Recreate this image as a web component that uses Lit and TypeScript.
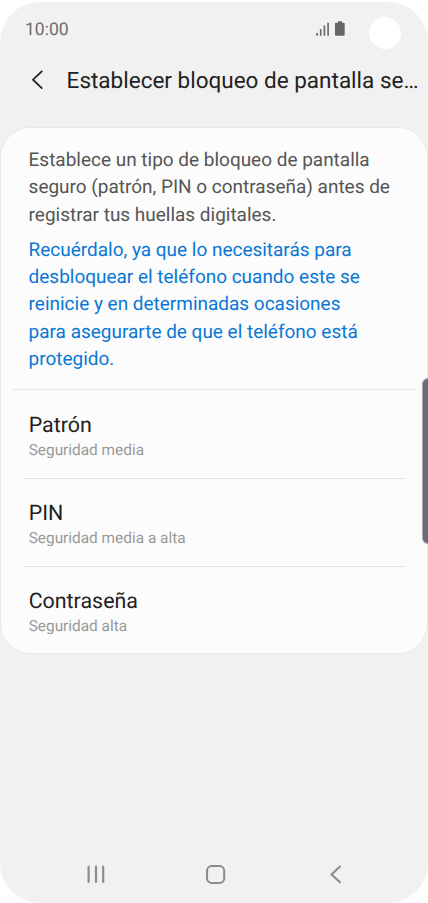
import { LitElement, html, css } from "lit";
import { customElement } from "lit/decorators.js";

const intro = [
  "Establece un tipo de bloqueo de pantalla",
  "seguro (patrón, PIN o contraseña) antes de",
  "registrar tus huellas digitales.",
];
const reminder = [
  "Recuérdalo, ya que lo necesitarás para",
  "desbloquear el teléfono cuando este se",
  "reinicie y en determinadas ocasiones",
  "para asegurarte de que el teléfono está",
  "protegido.",
];
const options = [
  { name: "Patrón", level: "Seguridad media" },
  { name: "PIN", level: "Seguridad media a alta" },
  { name: "Contraseña", level: "Seguridad alta" },
];

@customElement("app-root")
export class AppRoot extends LitElement {
  static styles = css`
    :host {
      display: block;
      width: 428px;
      height: 903px;
      background: #fff;
      overflow: hidden;
      font-family: Roboto, "Liberation Sans", sans-serif;
      text-rendering: geometricPrecision;
    }
    * {
      box-sizing: border-box;
    }
    svg {
      display: block;
    }
    .screen {
      position: relative;
      display: flex;
      flex-direction: column;
      height: 901px;
      margin-top: 2px;
      background: #f1f1f1;
      border-radius: 40px;
      overflow: hidden;
    }
    .status {
      display: flex;
      align-items: center;
      height: 54px;
      padding-left: 25px;
      color: #6c6c6c;
      font-size: 17.5px;
    }
    .clock {
      padding-top: 2px;
    }
    .signal {
      margin-left: auto;
      margin-right: 83px;
    }
    .camera {
      position: absolute;
      left: 368.5px;
      top: 14.5px;
      width: 32px;
      height: 32px;
      border-radius: 50%;
      background: #fff;
    }
    .header {
      display: flex;
      align-items: center;
      height: 48px;
      padding-left: 31px;
      gap: 23.6px;
    }
    .title {
      margin: 0;
      padding-top: 2px;
      font-size: 22.5px;
      font-weight: 400;
      line-height: 30px;
      color: #222;
      white-space: nowrap;
    }
    .card {
      height: 527px;
      margin-top: 23px;
      border: 1px solid #e8e8e8;
      border-radius: 30px;
      background: #fcfcfc;
    }
    .copy {
      height: 262px;
      margin: 0 11px;
      padding: 18px 0 0 16.6px;
      border-bottom: 1px solid #e8e8e8;
      font-size: 18.98px;
      line-height: 27.3px;
      white-space: nowrap;
    }
    .intro {
      color: #555;
    }
    .reminder {
      margin-top: 8px;
      color: #0977d5;
    }
    .option {
      height: 88px;
      margin: 0 22px 0 23px;
      padding: 21px 0 0 4.7px;
    }
    .option:nth-of-type(2) {
      height: 89px;
      padding-top: 22px;
    }
    .option:not(:last-child) {
      border-bottom: 1px solid #e2e2e2;
    }
    .name {
      font-size: 21.4px;
      line-height: 28px;
      color: #222;
    }
    .level {
      font-size: 15.4px;
      line-height: 21px;
      color: #999;
    }
    .handle {
      position: absolute;
      left: 421.5px;
      top: 376px;
      width: 14px;
      height: 166px;
      border-radius: 6px;
      border: 1px solid #aaa9ad;
      background: #6d6a7c;
    }
    .nav {
      display: flex;
      align-items: center;
      height: 58px;
      margin-top: auto;
    }
  `;

  render() {
    return html`
      <div class="screen">
        <div class="status">
          <span class="clock">10:00</span>
          <svg class="signal" width="30" height="16" viewBox="315 20 30 16" fill="#666">
            <path d="M316.3 32h1.6v2.8h-1.6zM319.9 28.2h1.6v6.6h-1.6zM323.6 24.5h1.6v10.3h-1.6zM327.3 21.7h1.6v13.1h-1.6z" />
            <path d="M338 20.3h4v1.4h1.7q1 0 1 1v11.1q0 1-1 1h-7.7q-1 0-1-1v-11.1q0-1 1-1h2z" />
          </svg>
        </div>
        <div class="header">
          <svg width="12" height="20" viewBox="31 70 12 20" fill="none" stroke="#222" stroke-width="1.8">
            <path d="M42.3 70.8L33 79.7L42.3 88.6" />
          </svg>
          <h1 class="title">Establecer bloqueo de pantalla se…</h1>
        </div>
        <div class="card">
          <div class="copy">
            <div class="intro">${intro.map((t) => html`<div>${t}</div>`)}</div>
            <div class="reminder">${reminder.map((t) => html`<div>${t}</div>`)}</div>
          </div>
          ${options.map(
            (o) => html`<div class="option">
              <div class="name">${o.name}</div>
              <div class="level">${o.level}</div>
            </div>`
          )}
        </div>
        <div class="nav">
          <svg width="428" height="58" viewBox="0 845 428 58" fill="none" stroke="#8c8c8c">
            <path d="M88.6 866.7v15.3M96 866.7v15.3M103.2 866.7v15.3" stroke-width="2.2" stroke-linecap="round" />
            <rect x="207" y="866" width="17.2" height="17" rx="4.8" stroke-width="2.1" />
            <path d="M340 866.5L331.5 874.4L340 882.3" stroke-width="2.1" stroke-linecap="round" />
          </svg>
        </div>
        <div class="camera"></div>
        <div class="handle"></div>
      </div>
    `;
  }
}
